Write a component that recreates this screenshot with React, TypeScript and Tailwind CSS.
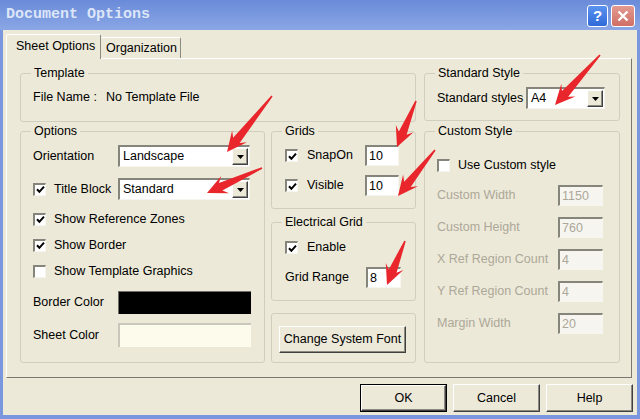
import React from "react";

const sunken =
  "border-t-2 border-l-2 border-b border-r border-t-[#85857c] border-l-[#85857c] border-b-[#f6f5f0] border-r-[#f6f5f0]";
const raised =
  "border border-t-white border-l-white border-b-[#404040] border-r-[#404040] shadow-[inset_-1px_-1px_0_#8a8a80]";

const Check = ({ checked }: { checked: boolean }) => (
  <span
    className={`w-[13px] h-[13px] shrink-0 bg-white flex items-center justify-center ${sunken}`}
  >
    {checked && (
      <svg width="9" height="9" viewBox="0 0 9 9">
        <path d="M1 4.2 L3.4 6.8 L8 1.6" stroke="#000" strokeWidth="2" fill="none" />
      </svg>
    )}
  </span>
);

const Group = ({
  title,
  className,
  children,
}: {
  title?: string;
  className: string;
  children?: React.ReactNode;
}) => (
  <div className={`relative border border-[#d0cebf] rounded-[3px] ${className}`}>
    {title && (
      <span className="absolute left-[10px] -top-[8px] bg-[#ece9d8] px-[3px] leading-[15px]">
        {title}
      </span>
    )}
    {children}
  </div>
);

const Select = ({ value, className }: { value: string; className: string }) => (
  <div className={`bg-white flex items-center pl-[3px] pr-[1px] ${sunken} ${className}`}>
    <span className="flex-1">{value}</span>
    <span className={`w-[16px] h-[17px] bg-[#ece9d8] flex items-center justify-center ${raised}`}>
      <svg width="7" height="4" viewBox="0 0 7 4">
        <path d="M0 0 H7 L3.5 4 Z" fill="#000" />
      </svg>
    </span>
  </div>
);

const TextBox = ({
  value,
  className,
  disabled,
}: {
  value: string;
  className: string;
  disabled?: boolean;
}) => (
  <div
    className={`h-[21px] flex items-center pl-[2px] ${sunken} ${
      disabled ? "bg-[#f6f5ef] text-[#aca899]" : "bg-white"
    } ${className}`}
  >
    {value}
  </div>
);

const Button = ({ label, def, className }: { label: string; def?: boolean; className: string }) => (
  <div className={`${def ? "border border-black" : ""} ${className}`}>
    <div className={`w-full h-full flex items-center justify-center bg-[#ece9d8] ${raised}`}>
      {label}
    </div>
  </div>
);

function arrowPoints(x1: number, y1: number, x2: number, y2: number) {
  const dx = x2 - x1;
  const dy = y2 - y1;
  const len = Math.hypot(dx, dy);
  const ux = dx / len;
  const uy = dy / len;
  const px = -uy;
  const py = ux;
  const hl = 20;
  const hw = 9.5;
  const sw = 4.2;
  const tw = 0.8;
  const bx = x2 - ux * hl;
  const by = y2 - uy * hl;
  const jx = bx + ux * 5;
  const jy = by + uy * 5;
  const pts = [
    [x1 + px * tw, y1 + py * tw],
    [jx + px * sw, jy + py * sw],
    [bx + px * hw, by + py * hw],
    [x2, y2],
    [bx - px * hw, by - py * hw],
    [jx - px * sw, jy - py * sw],
    [x1 - px * tw, y1 - py * tw],
  ];
  return pts.map((p) => p.join(",")).join(" ");
}

const arrows: [number, number, number, number][] = [
  [272, 96, 227, 152],
  [262, 168, 207, 193],
  [416, 101, 397, 147],
  [435, 150, 398, 196],
  [405, 241, 387, 285],
  [600, 55, 555, 105],
];

export default function App() {
  return (
    <div className="relative w-[640px] h-[419px] overflow-hidden flex flex-col bg-[#7a96df] font-['Liberation_Sans',Arial,sans-serif] text-[12.5px] text-black">
      {/* title bar */}
      <div className="h-[30px] shrink-0 flex items-center justify-between pl-[6px] pr-[5px] bg-gradient-to-b from-[#6a8bd9] to-[#8aa6e5]">
        <span className="font-['Liberation_Mono','Courier_New',monospace] font-bold text-[15px] text-[#dce6f8]">
          Document Options
        </span>
        <div className="flex gap-[3px] mt-[2px]">
          <div className="w-[21px] h-[22px] rounded-[3px] border border-white bg-gradient-to-b from-[#5b93f0] to-[#2f6ad8] flex items-center justify-center text-white font-bold text-[15px]">
            ?
          </div>
          <div className="w-[24px] h-[22px] rounded-[3px] border border-white bg-gradient-to-b from-[#e39a90] to-[#cf6f66] flex items-center justify-center">
            <svg width="12" height="12" viewBox="0 0 12 12">
              <path d="M1.5 1.5 L10.5 10.5 M10.5 1.5 L1.5 10.5" stroke="#fff" strokeWidth="2.4" />
            </svg>
          </div>
        </div>
      </div>

      {/* client */}
      <div className="flex-1 mx-[3px] mb-[4px] bg-[#ece9d8] flex flex-col">
        {/* tabs */}
        <div className="h-[28px] pl-[3px] flex items-end">
          <div className="relative z-10 -mb-px w-[95px] h-[25px] bg-[#ece9d8] border-t border-l border-white border-r border-r-[#8d8b80] rounded-t-[2px] flex items-center pl-[9px] pb-[2px]">
            Sheet Options
          </div>
          <div className="w-[80px] h-[21px] bg-[#ece9d8] border-t border-white border-r border-r-[#8d8b80] rounded-t-[2px] flex items-center pl-[5px]">
            Organization
          </div>
        </div>

        {/* panel */}
        <div className="ml-[3px] mr-[5px] h-[320px] border border-t-white border-l-white border-b-[#7a786c] border-r-[#7a786c] pl-[13px] pt-[14px] flex gap-[8px]">
          {/* left column */}
          <div className="w-[396px] flex flex-col">
            <Group title="Template" className="h-[49px] pt-[16px] pl-[12px]">
              <div className="flex items-center leading-[15px]">
                <span className="w-[73px]">File Name :</span>
                <span>No Template File</span>
              </div>
            </Group>

            <div className="mt-[9px] flex gap-[6px]">
              <Group title="Options" className="w-[245px] h-[232px] pt-[13px] pl-[12px]">
                <div className="flex items-center h-[22px]">
                  <span className="w-[85px]">Orientation</span>
                  <Select value="Landscape" className="w-[132px] h-[22px]" />
                </div>
                <div className="mt-[11px] flex items-center h-[22px]">
                  <div className="w-[85px] flex items-center gap-[8px]">
                    <Check checked />
                    <span>Title Block</span>
                  </div>
                  <Select value="Standard" className="w-[132px] h-[22px]" />
                </div>
                <div className="mt-[6px]">
                  {[
                    ["Show Reference Zones", true],
                    ["Show Border", true],
                    ["Show Template Graphics", false],
                  ].map(([label, c]) => (
                    <div key={label as string} className="h-[26px] flex items-center gap-[8px]">
                      <Check checked={c as boolean} />
                      <span>{label}</span>
                    </div>
                  ))}
                </div>
                <div className="mt-[7px] flex items-center h-[23px]">
                  <span className="w-[85px]">Border Color</span>
                  <div className="w-[133px] h-[23px] bg-black border-t border-l border-[#6e6e66]" />
                </div>
                <div className="mt-[9px] flex items-center h-[24px]">
                  <span className="w-[85px]">Sheet Color</span>
                  <div className="w-[133px] h-[24px] bg-[#fcfbec] border-t-2 border-l-2 border-t-[#c9c7bb] border-l-[#c9c7bb]" />
                </div>
              </Group>

              <div className="w-[145px] flex flex-col">
                <Group title="Grids" className="h-[78px] pt-[13px] pl-[13px]">
                  <div className="flex items-center h-[21px]">
                    <Check checked />
                    <span className="ml-[9px] w-[58px]">SnapOn</span>
                    <TextBox value="10" className="w-[34px]" />
                  </div>
                  <div className="mt-[9px] flex items-center h-[21px]">
                    <Check checked />
                    <span className="ml-[9px] w-[58px]">Visible</span>
                    <TextBox value="10" className="w-[34px]" />
                  </div>
                </Group>
                <Group title="Electrical Grid" className="mt-[13px] h-[79px] pt-[14px] pl-[13px]">
                  <div className="flex items-center h-[21px]">
                    <Check checked />
                    <span className="ml-[9px]">Enable</span>
                  </div>
                  <div className="mt-[9px] flex items-center h-[21px]">
                    <span className="w-[81px]">Grid Range</span>
                    <TextBox value="8" className="w-[35px]" />
                  </div>
                </Group>
                <Group className="mt-[12px] h-[50px] pt-[12px] pl-[7px]">
                  <Button label="Change System Font" className="w-[127px] h-[27px]" />
                </Group>
              </div>
            </div>
          </div>

          {/* right column */}
          <div className="w-[196px] flex flex-col">
            <Group title="Standard Style" className="h-[48px] pt-[13px] pl-[12px]">
              <div className="flex items-center h-[22px]">
                <span className="w-[89px]">Standard styles</span>
                <Select value="A4" className="w-[79px] h-[22px]" />
              </div>
            </Group>
            <Group title="Custom Style" className="mt-[10px] h-[232px] pt-[23px] pl-[12px]">
              <div className="flex items-center h-[21px] gap-[8px]">
                <Check checked={false} />
                <span>Use Custom style</span>
              </div>
              <div className="mt-[9px] flex flex-col gap-[11px] text-[#aca899]">
                {[
                  ["Custom Width", "1150"],
                  ["Custom Height", "760"],
                  ["X Ref Region Count", "4"],
                  ["Y Ref Region Count", "4"],
                  ["Margin Width", "20"],
                ].map(([label, v]) => (
                  <div key={label} className="flex items-center h-[21px]">
                    <span className="w-[121px]">{label}</span>
                    <TextBox value={v} disabled className="w-[45px]" />
                  </div>
                ))}
              </div>
            </Group>
          </div>
        </div>

        {/* buttons */}
        <div className="mt-[6px] pr-[4px] flex justify-end gap-[6px]">
          <Button label="OK" def className="w-[87px] h-[28px]" />
          <Button label="Cancel" className="w-[87px] h-[28px]" />
          <Button label="Help" className="w-[87px] h-[28px]" />
        </div>
      </div>

      {/* annotation arrows */}
      <svg
        className="absolute inset-0 pointer-events-none"
        width="640"
        height="419"
        viewBox="0 0 640 419"
      >
        {arrows.map((a, i) => (
          <polygon key={i} points={arrowPoints(a[0], a[1], a[2], a[3])} fill="#e8262b" />
        ))}
      </svg>
    </div>
  );
}
